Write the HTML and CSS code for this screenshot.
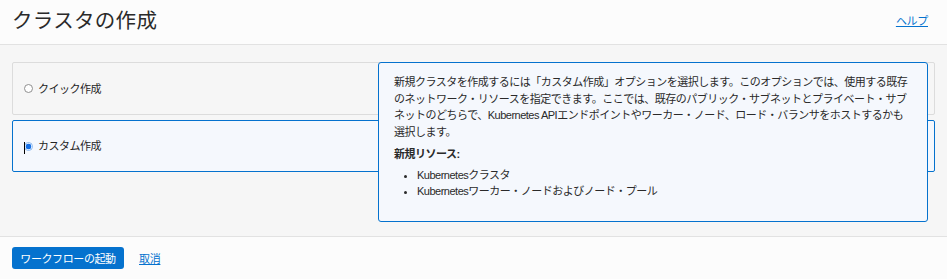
FILE: index.html
```html
<!DOCTYPE html>
<html lang="ja">
<head>
    <meta charset="UTF-8">
    <title>クラスタの作成</title>
    <link rel="stylesheet" href="styles.css">
</head>
<body>

    <div class="header">
        <h1>クラスタの作成</h1>
        <a href="#" class="help">ヘルプ</a>
    </div>

    <div class="main">
        <div class="option">
            <span class="radio"></span>
            <span class="label">クイック作成</span>
        </div>
        <div class="option selected">
            <span class="caret"></span>
            <span class="radio checked"></span>
            <span class="label">カスタム作成</span>
        </div>

        <!-- popup over the options -->
        <div class="popup">
            <p class="desc">新規クラスタを作成するには「カスタム作成」オプションを選択します。このオプションでは、使用する既存<br>のネットワーク・リソースを指定できます。ここでは、既存のパブリック・サブネットとプライベート・サブ<br>ネットのどちらで、Kubernetes APIエンドポイントやワーカー・ノード、ロード・バランサをホストするかも<br>選択します。</p>
            <p class="title">新規リソース:</p>
            <ul>
                <li>Kubernetesクラスタ</li>
                <li>Kubernetesワーカー・ノードおよびノード・プール</li>
            </ul>
        </div>
    </div>

    <div class="footer">
        <button>ワークフローの起動</button>
        <a href="#" class="cancel">取消</a>
    </div>

</body>
</html>
```

FILE: styles.css
```css
body {
    margin: 0;
    font-family: 'Liberation Sans', 'Noto Sans CJK JP', sans-serif;
    color: #252525;
    background: #fcfcfc;
}
a {
    color: #0572ce;
}
.header {
    height: 44px;
    display: flex;
    align-items: center;
    justify-content: space-between;
    padding: 0 19px 0 12px;
    border-bottom: 1px solid #e2e2e2;
    background: #fcfcfc;
}
.header h1 {
    margin: 0 0 6px 0;
    font-size: 20.5px;
    font-weight: normal;
    letter-spacing: 0.3px;
    color: #2a2a2a;
}
.help {
    font-size: 11px;
    letter-spacing: -0.3px;
    margin-bottom: 4px;
}
.main {
    position: relative;
    height: 192px;
    box-sizing: border-box;
    padding: 17px 12px 0 12px;
    background: #f6f6f6;
    border-bottom: 1px solid #e2e2e2;
}
.option {
    height: 53px;
    box-sizing: border-box;
    display: flex;
    align-items: center;
    padding-left: 11px;
    border: 1px solid #dcdcdc;
    border-radius: 2px;
    margin-bottom: 5px;
    font-size: 11px;
    letter-spacing: -0.5px;
    position: relative;
}
.option.selected {
    height: 52px;
    border-color: #0572ce;
    background: #f5f8fd;
}
.radio {
    width: 7px;
    height: 7px;
    border: 1px solid #8f8f8f;
    border-radius: 50%;
    background: #fff;
    margin-right: 5px;
}
.radio.checked {
    border-color: #8ab8f0;
    background: radial-gradient(circle closest-side, #1670e6 0, #1670e6 75%, #fff 90%);
}
.caret {
    position: absolute;
    left: 11px;
    top: 21px;
    width: 1px;
    height: 12px;
    background: #000;
}
.label {
    margin-bottom: 2px;
}
.popup {
    position: absolute;
    top: 17px;
    left: 378px;
    width: 550px;
    height: 160px;
    box-sizing: border-box;
    padding: 11px 16px 0 15px;
    border: 1px solid #0572ce;
    border-radius: 3px;
    background: #f5f8fd;
    font-size: 11px;
    letter-spacing: -0.5px;
    line-height: 16.5px;
    color: #2a2a2a;
}
.popup p {
    margin: 0;
}
.popup .desc {
    white-space: nowrap;
}
.popup .title {
    font-weight: bold;
    margin-top: 6px;
}
.popup ul {
    margin: 4px 0 0 0;
    padding-left: 23px;
}
.popup li {
    line-height: 16.5px;
}
.footer {
    height: 41px;
    display: flex;
    align-items: center;
    padding: 0 12px;
    background: #fcfcfc;
}
.footer button {
    height: 22px;
    width: 112px;
    border: none;
    border-radius: 3px;
    background: #0572ce;
    color: #fff;
    font-family: inherit;
    font-size: 11px;
    letter-spacing: -0.4px;
    padding: 0;
    margin-top: 1px;
}
.cancel {
    margin-left: 15px;
    font-size: 11px;
    letter-spacing: -0.3px;
}
```
